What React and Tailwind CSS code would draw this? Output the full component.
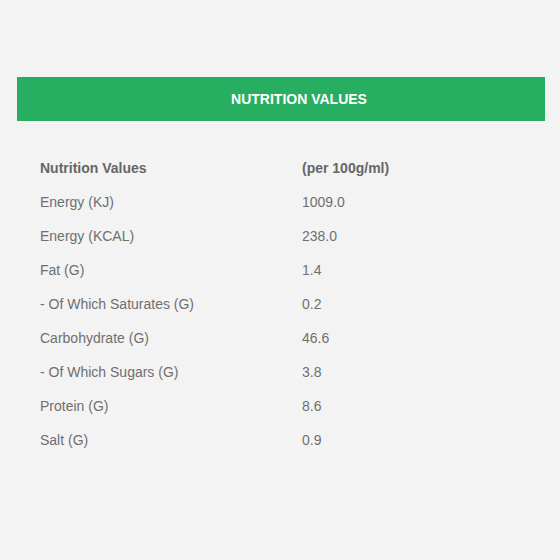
const rows = [
  ["Energy (KJ)", "1009.0"],
  ["Energy (KCAL)", "238.0"],
  ["Fat (G)", "1.4"],
  ["- Of Which Saturates (G)", "0.2"],
  ["Carbohydrate (G)", "46.6"],
  ["- Of Which Sugars (G)", "3.8"],
  ["Protein (G)", "8.6"],
  ["Salt (G)", "0.9"],
];

export default function App() {
  return (
    <div className="min-h-[560px] w-[560px] bg-[#f3f3f3] pt-[77px] px-[17px] font-['Liberation_Sans',Arial,sans-serif]">
      <div className="h-[44px] w-[528px] bg-[#27ae60] flex items-center justify-center pl-[36px]">
        <h2 className="text-white text-[14px] font-bold">NUTRITION VALUES</h2>
      </div>
      <div className="mt-[30px] px-[23px]">
        <div className="grid grid-cols-[262px_1fr] h-[34px] items-center text-[14px] font-bold text-[#666]">
          <span>Nutrition Values</span>
          <span>(per 100g/ml)</span>
        </div>
        {rows.map(([name, value]) => (
          <div
            key={name}
            className="grid grid-cols-[262px_1fr] h-[34px] items-center text-[14px] text-[#6f6f6f]"
          >
            <span>{name}</span>
            <span>{value}</span>
          </div>
        ))}
      </div>
    </div>
  );
}
